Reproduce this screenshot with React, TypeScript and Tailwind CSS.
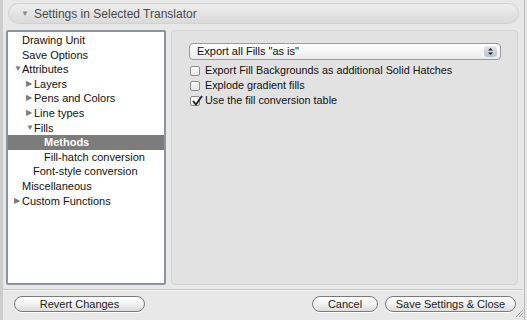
import React from 'react';

const font = { fontFamily: '"Lucida Grande", "Liberation Sans", Arial, sans-serif' };

type Item = { label: string; indent: number; arrow?: 'open' | 'closed'; selected?: boolean };

const items: Item[] = [
  { label: 'Drawing Unit', indent: 22 },
  { label: 'Save Options', indent: 22 },
  { label: 'Attributes', indent: 22, arrow: 'open' },
  { label: 'Layers', indent: 34, arrow: 'closed' },
  { label: 'Pens and Colors', indent: 34, arrow: 'closed' },
  { label: 'Line types', indent: 34, arrow: 'closed' },
  { label: 'Fills', indent: 34, arrow: 'open' },
  { label: 'Methods', indent: 44, selected: true },
  { label: 'Fill-hatch conversion', indent: 44 },
  { label: 'Font-style conversion', indent: 33 },
  { label: 'Miscellaneous', indent: 22 },
  { label: 'Custom Functions', indent: 22, arrow: 'closed' },
];

function TreeRow({ item }: { item: Item }) {
  return (
    <div
      className={`relative h-[14.6px] leading-[14.6px] text-[11px] whitespace-nowrap ${
        item.selected ? 'bg-[#7c7c7c] text-white font-bold' : 'text-[#111]'
      }`}
      style={{ paddingLeft: item.indent - 8 }}
    >
      {item.arrow && (
        <span
          className="absolute top-0 text-[8px] text-[#7a7a7a]"
          style={{ left: item.indent - 16 }}
        >
          {item.arrow === 'open' ? '▼' : '▶'}
        </span>
      )}
      {item.label}
    </div>
  );
}

function Check({ checked, label }: { checked?: boolean; label: string }) {
  return (
    <div className="flex items-center gap-[5px] h-[15px] text-[10.8px] text-[#111]">
      <div className="w-[10px] h-[10px] rounded-[2px] border border-[#8d8d8d] bg-gradient-to-b from-white to-[#e6e6e6] relative">
        {checked && (
          <svg viewBox="0 0 12 12" className="absolute -top-[2px] left-0 w-[12px] h-[12px]">
            <path d="M2 6 L5 9.5 L11 1" fill="none" stroke="#222" strokeWidth="1.8" />
          </svg>
        )}
      </div>
      <span>{label}</span>
    </div>
  );
}

function PillButton({ label, width }: { label: string; width: number }) {
  return (
    <button
      className="h-[16px] rounded-full border border-[#7a7a7a] bg-gradient-to-b from-white via-[#f2f2f2] to-[#dcdcdc] text-[11px] text-[#222] leading-none shadow-[0_1px_0_#fff]"
      style={{ width }}
    >
      {label}
    </button>
  );
}

export default function App() {
  return (
    <div
      className="w-[527px] h-[320px] bg-[#e8e8e8] relative overflow-hidden border-l-[3px] border-[#cdcdcd] flex flex-col"
      style={font}
    >
      <div className="absolute right-[2px] top-0 bottom-0 w-px bg-[#b8b8b8]" />
      <div className="mt-[3px] ml-[5px] mr-[8px] h-[21px] rounded-full bg-gradient-to-b from-[#eeeeee] to-[#dadada] border border-[#d2d2d2] flex items-center pl-[12px] text-[12px] text-[#4a4a4a]">
        <span className="text-[8px] text-[#8a8a8a] mr-[5px]">▼</span>
        Settings in Selected Translator
      </div>

      <div className="flex mt-[6px] ml-[3px] mr-[9px] gap-[5px] h-[255px]">
        <div className="w-[160px] bg-white border-2 border-[#8e949c] rounded-[2px] pt-[1px] overflow-hidden">
          {items.map((it) => (
            <TreeRow key={it.label} item={it} />
          ))}
        </div>
        <div className="flex-1 bg-[#e2e2e2] border border-[#d4d4d4] rounded-[4px] pt-[12px] pl-[17px] pr-[16px]">
          <div className="h-[17px] rounded-[4px] border border-[#9a9a9a] bg-gradient-to-b from-white to-[#ececec] flex items-center justify-between pl-[7px] pr-[3px] text-[11px] text-[#111]">
            <span>Export all Fills "as is"</span>
            <div className="w-[13px] h-[11px] rounded-[3px] bg-gradient-to-b from-[#e4e8f0] to-[#b9c2d0] flex flex-col items-center justify-center">
              <svg width="7" height="9" viewBox="0 0 7 9">
                <path d="M1 3.5 L3.5 1 L6 3.5 Z" fill="#222" />
                <path d="M1 5.5 L3.5 8 L6 5.5 Z" fill="#222" />
              </svg>
            </div>
          </div>
          <div className="mt-[3px] pl-[1px]">
            <Check label="Export Fill Backgrounds as additional Solid Hatches" />
            <Check label="Explode gradient fills" />
            <Check checked label="Use the fill conversion table" />
          </div>
        </div>
      </div>

      <div className="mt-[4px] mr-[5px] h-[2px] border-t border-[#c6c6c6] bg-[#f4f4f4]" />

      <div className="flex items-center mt-[5px] pl-[11px] pr-[11px]">
        <PillButton label="Revert Changes" width={131} />
        <div className="flex-1" />
        <PillButton label="Cancel" width={66} />
        <div className="w-[7px]" />
        <PillButton label="Save Settings & Close" width={131} />
      </div>

      <svg className="absolute right-[3px] bottom-[2px]" width="10" height="10" viewBox="0 0 10 10">
        <path d="M9 2 L2 9 M9 5 L5 9 M9 8 L8 9" stroke="#a0a0a0" strokeWidth="1" />
      </svg>
    </div>
  );
}
